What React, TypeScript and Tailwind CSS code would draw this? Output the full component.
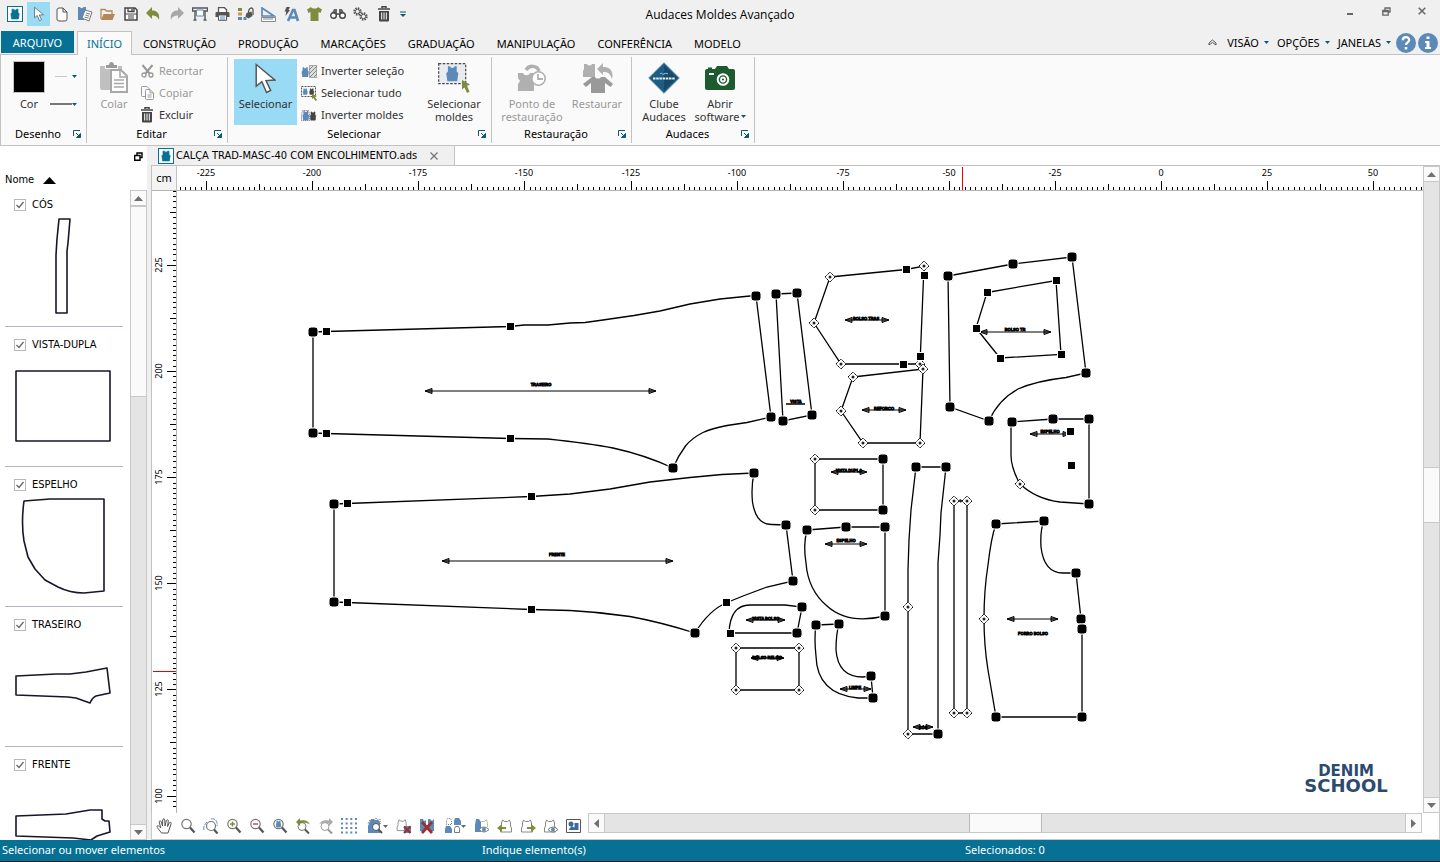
import React from "react";

const VEST = "M4 1.5h2c.3 2 3.700 2 4 0h2v4.500l1.500 1.500-1 7h-9l-1-7L4 6z";
const BLUE = "#5b8ab8";
const OLIVE = "#7f8c3d";
const DARK = "#555555";

interface DrawProps {
  w?: number;
  h?: number;
  box?: string;
  children: React.ReactNode;
}

const Draw = ({ w = 16, h = w, box = `0 0 ${w} ${h}`, children }: DrawProps) => (
  <svg width={w} height={h} viewBox={box} fill="none" className="shrink-0" aria-hidden>
    {children}
  </svg>
);

const Caret = ({ color = "#0b5a73" }: { color?: string }) => (
  <Draw w={5} h={3}>
    <path d="M0 0h5L2.500 3z" fill={color} />
  </Draw>
);

const Launcher = () => (
  <Draw w={8}>
    <path d="M.5 6V.5H7" stroke="#0b5a73" />
    <path d="M3 3l3 3M7.500 3.500v4h-4z" stroke="#0b5a73" fill="#0b5a73" />
  </Draw>
);

const AppIcon = () => (
  <Draw w={16}>
    <rect x=".5" y=".5" width="15" height="15" fill="#fff" stroke="#067195" />
    <g transform="translate(2 2) scale(.75)">
      <path d={VEST} fill="#067195" stroke="#067195" />
    </g>
  </Draw>
);

const Pointer = ({ w, h }: { w: number; h: number }) => (
  <Draw w={w} h={h} box="0 0 20 30">
    <path d="M1 1.500v21l5.500-4.500 4.500 10.500 4-2-4.500-9.500 8.500-.5z" fill="#fff" stroke="#555" strokeWidth="1.400" />
  </Draw>
);

const Trash = () => (
  <Draw w={14} h={16}>
    <path d="M5 2V.7h4V2M1 3h12" stroke="#444" strokeWidth="1.500" />
    <path d="M2 5h10v9.500a1 1 0 0 1-1 1H3a1 1 0 0 1-1-1z" fill="#444" />
    <path d="M4.700 6.500v7M7 6.500v7M9.300 6.500v7" stroke="#fff" />
  </Draw>
);

const quickTools: { label: string; icon: React.ReactNode }[] = [
  { label: "Selecionar", icon: <Pointer w={10} h={16} /> },
  {
    label: "Novo",
    icon: (
      <Draw w={12} h={15}>
        <path d="M1 3a2 2 0 0 1 2-2h4l4 4v7a2 2 0 0 1-2 2H3a2 2 0 0 1-2-2zM7 1v4h4" stroke={DARK} fill="#fff" />
      </Draw>
    ),
  },
  {
    label: "Novo modelo",
    icon: (
      <Draw w={16}>
        <path d="M1 1h2c.3 1.500 3 1.500 3.500 0h2.500v4l-2 9H1V6z" fill={BLUE} />
        <path d="M8 4l7 2-3 9-7-3z" fill="#fff" stroke="#777" />
        <path d="M9 7l4 1.200M8.300 9l4 1.200M7.600 11l4 1.200" stroke="#777" />
      </Draw>
    ),
  },
  {
    label: "Abrir",
    icon: (
      <Draw w={15} h={13}>
        <path d="M1 11V1.500h4l1.500 1.500H12v3" stroke="#b5885a" strokeWidth="1.300" />
        <path d="M3.500 6H15l-2.500 6H1z" fill="#b5885a" />
      </Draw>
    ),
  },
  {
    label: "Salvar",
    icon: (
      <Draw w={14}>
        <path d="M1 1h10l2 2v10H1z" fill="#fff" stroke="#444" strokeWidth="1.500" />
        <path d="M4 1v3.500h6V1M8 2v2" stroke="#444" strokeWidth="1.300" />
        <path d="M1 7h12M4 9h6M4 11h6" stroke="#444" />
      </Draw>
    ),
  },
  {
    label: "Desfazer",
    icon: (
      <Draw w={15} h={14}>
        <path d="M6 0v3.500c5 0 8 2.500 7 9.500-1.500-3.500-3.500-4.500-7-4.500V12L0 6z" fill={OLIVE} />
      </Draw>
    ),
  },
  {
    label: "Refazer",
    icon: (
      <Draw w={15} h={14}>
        <path d="M9 0v3.500C4 3.500 1 6 2 13c1.500-3.500 3.500-4.500 7-4.500V12l6-6z" fill="#a5a8ab" />
      </Draw>
    ),
  },
  {
    label: "Plotar",
    icon: (
      <Draw w={16} h={14}>
        <path d="M.5 1h15v3H.5zM3 13V4M13 13V4M1.500 13h3M11.500 13h3" stroke={DARK} strokeWidth="1.400" />
        <path d="M4.500 3h7v6h-7z" fill="#fff" stroke={BLUE} />
      </Draw>
    ),
  },
  {
    label: "Imprimir",
    icon: (
      <Draw w={15} h={14}>
        <path d="M3.500 5V.7h6l2 2V5" stroke={DARK} strokeWidth="1.300" fill="#fff" />
        <path d="M.5 6a1 1 0 0 1 1-1h12a1 1 0 0 1 1 1v4h-14z" fill={DARK} />
        <path d="M3.500 8h8v5.300h-8z" fill="#fff" stroke={DARK} />
        <path d="M5 10h5M5 12h5" stroke={BLUE} />
      </Draw>
    ),
  },
  {
    label: "Cores",
    icon: (
      <Draw w={16} h={14}>
        <path d="M0 1h4v3H0z" fill={OLIVE} />
        <path d="M0 5.500h4v3H0z" fill="#c8964e" />
        <path d="M0 10h4v3H0zM5.500 10h3v3h-3z" fill={BLUE} />
        <path d="M8.500 6l5-1.500 1 4.500-4 2.500-3-2z" fill={DARK} />
        <path d="M10.500 6c0-6 4.500-6 4.500-3v5" stroke={DARK} strokeWidth="1.300" />
      </Draw>
    ),
  },
  {
    label: "Medir",
    icon: (
      <Draw w={15} h={15}>
        <path d="M1 1l12 8H1z" stroke={BLUE} strokeWidth="1.700" />
        <path d="M.5 10.500h14v4H.5z" fill="#fff" stroke="#888" />
        <path d="M3 11v2M5 11v2M7 11v2M9 11v2M11 11v2" stroke="#888" />
      </Draw>
    ),
  },
  {
    label: "Texto rápido",
    icon: (
      <Draw w={16} h={15}>
        <path d="M4 14l5-11h1.500L14 14M6 10.500h6.500" stroke={BLUE} strokeWidth="2.600" />
        <path d="M2.500 0H6L4.500 3H6L1.500 9l.7-4.500H.5z" fill={DARK} />
      </Draw>
    ),
  },
  {
    label: "Vestir",
    icon: (
      <Draw w={15} h={14}>
        <path d="M4 0c1 2 6 2 7 0l4 2.500L13.500 6 11.500 5v9h-8V5l-2 1L0 2.500z" fill={OLIVE} />
      </Draw>
    ),
  },
  {
    label: "Procurar",
    icon: (
      <Draw w={16} h={12}>
        <path d="M4 1h3v4h2V1h3l2 4H2z" fill="#666" />
        <circle cx="3.500" cy="7.500" r="2.800" stroke="#444" strokeWidth="1.400" fill="#fff" />
        <circle cx="12.500" cy="7.500" r="2.800" stroke="#444" strokeWidth="1.400" fill="#fff" />
        <path d="M6 6h4" stroke="#444" strokeWidth="1.500" />
      </Draw>
    ),
  },
  {
    label: "Configurações",
    icon: (
      <Draw w={15} h={14}>
        <circle cx="4.500" cy="4.500" r="3.200" stroke={DARK} strokeDasharray="1.500 1" strokeWidth="2" />
        <circle cx="4.500" cy="4.500" r="2.200" stroke={DARK} />
        <circle cx="10.500" cy="9.500" r="3.200" stroke={DARK} strokeDasharray="1.500 1" strokeWidth="2" />
        <circle cx="10.500" cy="9.500" r="2.200" stroke={DARK} />
      </Draw>
    ),
  },
  { label: "Excluir", icon: <Trash /> },
];

const TitleBar = () => (
  <header className="grid h-[31px] grid-cols-[1fr_auto_1fr] items-start">
    <div className="flex h-7 items-center pl-[3px]">
      <span className="flex w-6 justify-center">
        <AppIcon />
      </span>
      {quickTools.map((tool, i) => (
        <button
          key={tool.label}
          type="button"
          aria-label={tool.label}
          className={`flex h-6 w-[23px] items-center justify-center ${i === 0 ? "bg-[#99daf4]" : ""}`}
        >
          {tool.icon}
        </button>
      ))}
      <button type="button" aria-label="Personalizar" className="flex w-4 justify-center">
        <Draw w={6}>
          <path d="M0 1h6" stroke="#0b5a73" />
          <path d="M0 3h6L3 6z" fill="#0b5a73" />
        </Draw>
      </button>
    </div>
    <h1 className="pt-1 font-['Open_Sans',sans-serif] text-[12px] leading-[22px]">Audaces Moldes Avançado</h1>
    <div className="flex h-[22px] items-center justify-end">
      <button type="button" aria-label="Minimizar" className="flex w-9 justify-center">
        <Draw w={6} h={8}>
          <path d="M0 7h6" stroke="#666" strokeWidth="2" />
        </Draw>
      </button>
      <button type="button" aria-label="Restaurar janela" className="flex w-9 justify-center">
        <Draw w={9}>
          <path d="M3 3V1h5v4H6M.8 3.500h5.400v4.700H.8zM.8 4.500h5" stroke="#666" strokeWidth="1.300" />
        </Draw>
      </button>
      <button type="button" aria-label="Fechar" className="flex w-9 justify-center">
        <Draw w={8}>
          <path d="M.7.700l6.600 6.600M7.300.700L.7 7.300" stroke="#666" strokeWidth="1.500" />
        </Draw>
      </button>
    </div>
  </header>
);

const tabs = ["CONSTRUÇÃO", "PRODUÇÃO", "MARCAÇÕES", "GRADUAÇÃO", "MANIPULAÇÃO", "CONFERÊNCIA", "MODELO"];
const menus = ["VISÃO", "OPÇÕES", "JANELAS"];

const TabBar = () => (
  <nav className="flex h-6 items-stretch border-b border-[#c2c2c2] pl-px text-[11px] leading-6">
    <button type="button" className="mb-px w-[73px] bg-[#067195] text-white">
      ARQUIVO
    </button>
    <button
      type="button"
      className="-mb-px ml-[3px] w-[55px] border border-b-0 border-[#c2c2c2] bg-[#fafafa] text-[#067195]"
    >
      INÍCIO
    </button>
    {tabs.map((tab) => (
      <button key={tab} type="button" className="px-[11px] pt-px">
        {tab}
      </button>
    ))}
    <div className="ml-auto flex items-center pr-px">
      <button type="button" aria-label="Recolher" className="mr-[10px]">
        <Draw w={9} h={7}>
          <path d="M1 4l3.500-3L8 4v2L4.500 3.500 1 6z" stroke="#555" />
        </Draw>
      </button>
      {menus.map((menu) => (
        <button key={menu} type="button" className="mr-2 flex items-center gap-[5px]">
          {menu}
          <Caret />
        </button>
      ))}
      <button type="button" aria-label="Ajuda" className="-ml-1 flex w-[22px] justify-center">
        <Draw w={20}>
          <circle cx="10" cy="10" r="10" fill={BLUE} />
          <path d="M6.800 7.200c0-4 6.400-4 6.400-.2 0 2.500-3.200 2.300-3.200 5" stroke="#fff" strokeWidth="2.300" />
          <path d="M8.700 14h2.600v2.500H8.700z" fill="#fff" />
        </Draw>
      </button>
      <button type="button" aria-label="Informações" className="flex w-[22px] justify-center">
        <Draw w={20}>
          <circle cx="10" cy="10" r="10" fill={BLUE} />
          <path d="M8.500 3.500h3V6h-3zM7 8h4.500v6H13v2H7v-2h1.500v-4H7z" fill="#fff" />
        </Draw>
      </button>
    </div>
  </nav>
);

const RibbonGroup = ({ title, width, children }: { title: string; width: string; children: React.ReactNode }) => (
  <section className={`my-0.5 flex flex-col border-r border-[#c2c2c2] ${width}`}>
    <div className="flex h-[68px] items-start">{children}</div>
    <div className="flex items-center pr-[5px]">
      <h2 className="flex-1 pl-0.5 text-center text-[11px] leading-[18px]">{title}</h2>
      <button type="button" aria-label={`Opções de ${title}`}>
        <Launcher />
      </button>
    </div>
  </section>
);

interface BigProps {
  icon: React.ReactNode;
  lines: string[];
  width: string;
  active?: boolean;
  disabled?: boolean;
  menu?: boolean;
}

const BigButton = ({ icon, lines, width, active, disabled, menu }: BigProps) => (
  <button
    type="button"
    disabled={disabled}
    className={`mt-0.5 flex h-[66px] shrink-0 flex-col items-center text-[11px] leading-[13px] ${width} ${
      active ? "bg-[#99daf4]" : ""
    } ${disabled ? "text-[#999]" : "text-[#333]"}`}
  >
    <span className="flex h-[38px] items-center">{icon}</span>
    {lines.map((line, i) => (
      <span key={line} className="flex items-center gap-px whitespace-nowrap">
        {line}
        {menu && i === lines.length - 1 && <Caret />}
      </span>
    ))}
  </button>
);

const SmallButton = ({ icon, label, disabled }: { icon: React.ReactNode; label: string; disabled?: boolean }) => (
  <button
    type="button"
    disabled={disabled}
    className={`flex h-[22px] items-center gap-1 text-[11px] whitespace-nowrap ${disabled ? "text-[#999]" : "text-[#333]"}`}
  >
    <span className="flex w-4 justify-center">{icon}</span>
    {label}
  </button>
);

const GRAY = "#b0b0b0";

const Ribbon = () => (
  <div className="flex h-[91px] border-b border-l border-[#c2c2c2] bg-[#fafafa]">
    <RibbonGroup title="Desenho" width="w-[86px]">
      <button type="button" className="mt-1 ml-3 flex flex-col items-center text-[11px] leading-[18px] text-[#333]">
        <span className="mb-0.5 h-8 w-8 border border-[#c2c2c2] bg-black" />
        Cor
      </button>
      <div className="ml-[5px] flex flex-col gap-[22px] pt-4">
        <button type="button" aria-label="Estilo da linha" className="flex h-[6px] items-center justify-end gap-[5px]">
          <span className="h-px w-3 bg-[#c8c8c8]" />
          <Caret />
        </button>
        <button type="button" aria-label="Espessura da linha" className="flex h-[6px] items-center">
          <span className="h-0.5 w-[22px] bg-[#777]" />
          <Caret />
        </button>
      </div>
    </RibbonGroup>

    <RibbonGroup title="Editar" width="w-[141px]">
      <BigButton
        width="ml-1 w-[46px]"
        disabled
        lines={["Colar"]}
        icon={
          <Draw w={28} h={32}>
            <path d="M0 4h5v3h13V4h4v24H2a2 2 0 0 1-2-2z" fill="#c0c0c0" />
            <path d="M6 3h3c0-4 5-4 5 0h3v3H6z" fill="#999" />
            <path d="M11 8h10l6 6v16H11z" fill="#fff" stroke="#a8a8a8" strokeWidth="2" />
            <path d="M20 8v7h7M14 18h10M14 21.500h10M14 25h10" stroke="#a8a8a8" strokeWidth="1.500" />
          </Draw>
        }
      />
      <div className="ml-0.5 flex flex-col pt-[3px]">
        <SmallButton
          disabled
          label="Recortar"
          icon={
            <Draw w={13} h={14}>
              <path d="M1.500 1l7 8.500M11.500 1l-7 8.500" stroke="#999" strokeWidth="2" />
              <circle cx="3" cy="11" r="2" stroke="#999" strokeWidth="1.300" />
              <circle cx="10" cy="11" r="2" stroke="#999" strokeWidth="1.300" />
            </Draw>
          }
        />
        <SmallButton
          disabled
          label="Copiar"
          icon={
            <Draw w={13} h={14}>
              <path d="M4 10.500H1.500a1 1 0 0 1-1-1v-8a1 1 0 0 1 1-1H6L8.500 3" stroke="#999" />
              <path d="M4.500 4.500a1 1 0 0 1 1-1H9L12.500 7v5.500a1 1 0 0 1-1 1h-6a1 1 0 0 1-1-1zM9 4v3h3M6.500 9h4M6.500 11h4" stroke="#999" fill="#fff" />
            </Draw>
          }
        />
        <SmallButton label="Excluir" icon={<Trash />} />
      </div>
    </RibbonGroup>

    <RibbonGroup title="Selecionar" width="w-[264px]">
      <BigButton width="ml-1.5 w-[63px]" active lines={["Selecionar"]} icon={<Pointer w={21} h={31} />} />
      <div className="ml-1 flex flex-col pt-[3px]">
        <SmallButton
          label="Inverter seleção"
          icon={
            <Draw w={16} h={13}>
              <g transform="translate(-1 1) scale(.65 .75)">
                <path d={VEST} fill={BLUE} />
              </g>
              <path d="M8.500.500h7v12h-7z" stroke="#666" strokeDasharray="1 1" fill="#ddd" />
              <path d="M8 5l4-4M8 9l8-8M9 12l7-7M13 12l3-3" stroke="#888" />
            </Draw>
          }
        />
        <SmallButton
          label="Selecionar tudo"
          icon={
            <Draw w={16} h={15}>
              <path d="M.5.500h14v10H.5z" stroke="#555" strokeDasharray="2 1" />
              <g transform="translate(1 2) scale(.4 .45)">
                <path d={VEST} fill={BLUE} stroke={BLUE} />
              </g>
              <g transform="translate(7.500 2) scale(.4 .45)">
                <path d={VEST} fill="#444" stroke="#444" />
              </g>
              <path d="M11 8l5 2-2 1 2 3-1.500 1-2-3-1.500 1z" fill={OLIVE} />
            </Draw>
          }
        />
        <SmallButton
          label="Inverter moldes"
          icon={
            <Draw w={16} h={11}>
              <g transform="scale(.6 .7)">
                <path d={VEST} fill={BLUE} />
              </g>
              <path d="M.5 10.500v-5l1-5h6l1 4v6z" stroke="#666" strokeDasharray="1 1" />
              <g transform="translate(8 1) scale(.5 .63)">
                <path d={VEST} fill="#444" stroke="#444" />
              </g>
            </Draw>
          }
        />
      </div>
      <BigButton
        width="ml-auto mr-1 w-[66px]"
        lines={["Selecionar", "moldes"]}
        icon={
          <Draw w={32}>
            <path d="M.7 1.700h27v20H.7z" fill="#e8ecf0" stroke="#444" strokeWidth="1.200" strokeDasharray="2.500 1.500" />
            <g transform="translate(5.500 2.500) scale(1.100 1.150)">
              <path d={VEST} fill={BLUE} />
            </g>
            <path d="M24 18l8 4.500-3 1.300 2.500 6-2.500 1.200-2.500-5.500-2.500 2z" fill={OLIVE} />
          </Draw>
        }
      />
    </RibbonGroup>

    <RibbonGroup title="Restauração" width="w-[140px]">
      <BigButton
        width="ml-2 w-[64px]"
        disabled
        lines={["Ponto de", "restauração"]}
        icon={
          <Draw w={30}>
            <path d="M1 10h5c1 3 6 3 7 0h4v18H1v-7l2-3-2-3z" fill={GRAY} />
            <path d="M9 7c3-5 11-5 13 1" stroke={GRAY} strokeWidth="3.500" />
            <circle cx="21.500" cy="15.500" r="6.700" fill="#fff" stroke={GRAY} strokeWidth="1.600" />
            <path d="M21 11v5h5" stroke="#999" strokeWidth="1.300" />
          </Draw>
        }
      />
      <BigButton
        width="w-[66px]"
        disabled
        lines={["Restaurar"]}
        icon={
          <Draw w={31} h={32}>
            <path d="M2 2h3c1 2 4 2 5 0h3v13H1V9l1-2z" fill={GRAY} />
            <path d="M15 7l6-6v4c7-1 11 5 9 12-2-6-4-7-9-7v3z" fill={GRAY} />
            <path d="M10 15h3c1 2 5 2 6 0h4l8 7-2.500 3-5.500-4v10H9V21l-5 4-3-3z" fill="#999" />
          </Draw>
        }
      />
    </RibbonGroup>

    <RibbonGroup title="Audaces" width="w-[123px]">
      <BigButton
        width="ml-1.5 w-[52px]"
        lines={["Clube", "Audaces"]}
        icon={
          <Draw w={32}>
            <path d="M16 .7L31.300 16 16 31.300.7 16z" fill="#1c5c85" stroke="#6d97ad" />
            <path d="M16 3l13 13-13 13z" fill="#17496b" />
            <path d="M12 12c2-2 2 1 4 0s2-1 4 0" stroke="#a9c6d8" />
            <path d="M5 16.500h22" stroke="#e4eef3" strokeWidth="2" strokeDasharray="2.500 .7" />
          </Draw>
        }
      />
      <BigButton
        width="ml-[3px] w-[54px]"
        menu
        lines={["Abrir", "software"]}
        icon={
          <Draw w={30} h={24}>
            <path d="M0 5a2 2 0 0 1 2-2h1V1.500h4V3h3l2-3h10l2 3h4a2 2 0 0 1 2 2v17a2 2 0 0 1-2 2H2a2 2 0 0 1-2-2z" fill="#1d5a2e" />
            <path d="M4 8h5" stroke="#fff" strokeWidth="2" />
            <circle cx="18" cy="13.500" r="5.300" stroke="#fff" strokeWidth="2" />
            <circle cx="18" cy="13.500" r="2" stroke="#fff" strokeWidth="1.800" />
          </Draw>
        }
      />
    </RibbonGroup>
  </div>
);

const thumbs: { name: string; d: string }[] = [
  { name: "CÓS", d: "M59 4h11l-2 24-1 8v62H56V40l1-16z" },
  { name: "VISTA-DUPLA", d: "M16 16h94v70H16z" },
  { name: "ESPELHO", d: "M24 6l26-2h54v92l-20 2q-14 0-26-6l-13-7-10-11-7-12-4-16q-3-18 0-40z" },
  { name: "TRASEIRO", d: "M16 41l40-2h14l16-2 21-4 3 25-14 3q-4 2-6 7l-14-5-8-1-52-2z" },
  { name: "FRENTE", d: "M16 41l50-2 24-4h12v9l3 2h4l1 11-13 4-6 4-18-2-57-2z" },
];

const arrowButton = "flex shrink-0 items-center justify-center border border-[#c8c8c8] bg-[#fafafa]";

const VerticalScroll = ({ thumb, before = "hidden", after }: { thumb: string; before?: string; after: string }) => (
  <div className="flex w-[17px] shrink-0 flex-col border-x border-[#c8c8c8] bg-[#e4e4e4]">
    <button type="button" aria-label="Rolar para cima" className={`-mx-px h-4 ${arrowButton}`}>
      <Draw w={9} h={5}>
        <path d="M4.500 0L9 5H0z" fill="#707070" />
      </Draw>
    </button>
    <div className={before} />
    <div className={`-mx-px border border-[#c8c8c8] bg-[#fafafa] ${thumb}`} />
    <div className={after} />
    <button type="button" aria-label="Rolar para baixo" className={`-mx-px h-4 ${arrowButton}`}>
      <Draw w={9} h={5}>
        <path d="M4.500 5L9 0H0z" fill="#707070" />
      </Draw>
    </button>
  </div>
);

const PieceList = () => (
  <aside className="flex w-[147px] shrink-0 flex-col bg-white font-['DejaVu_Sans_Condensed','DejaVu_Sans',sans-serif]">
    <div className="flex h-5 items-center justify-end pr-1">
      <button type="button" aria-label="Desencaixar painel">
        <Draw w={9}>
          <path d="M3 3V1h5v4.500H6M.7 3.500H6v4.700H.7z" stroke="#000" strokeWidth="1.400" />
        </Draw>
      </button>
    </div>
    <button type="button" className="flex h-6 items-center gap-[9px] pt-1 pl-[5px] text-[11px]">
      Nome
      <Draw w={13} h={7}>
        <path d="M6.500 0L13 7H0z" fill="#000" />
      </Draw>
    </button>
    <div className="flex min-h-0 flex-1">
      <ul className="-mt-[3px] min-w-0 flex-1 overflow-hidden">
        {thumbs.map((piece) => (
          <li key={piece.name} className="mr-[7px] ml-[5px] flex flex-col border-b border-[#b4b4c8]">
            <label className="flex h-7 items-center gap-1.5 pt-2 pl-[9px] text-[11px] leading-3">
              <span className="grid h-3 w-3 place-items-center">
                <input
                  type="checkbox"
                  defaultChecked
                  className="peer col-start-1 row-start-1 h-3 w-3 appearance-none border border-[#b8b8b8] bg-white"
                />
                <svg viewBox="0 0 8 8" className="pointer-events-none invisible col-start-1 row-start-1 h-2 w-2 peer-checked:visible" aria-hidden>
                  <path d="M.5 4L3 6.500 7.500 1" fill="none" stroke="#666" strokeWidth="1.300" />
                </svg>
              </span>
              {piece.name}
            </label>
            <svg className="h-[111px] w-full" aria-hidden>
              <path d={piece.d} transform="translate(-5 0)" fill="none" stroke="#16162a" strokeWidth="1.600" strokeLinejoin="round" />
            </svg>
          </li>
        ))}
      </ul>
      <VerticalScroll thumb="h-[191px]" after="flex-1" />
    </div>
  </aside>
);

// ruler scale: 25 cm take 106.1 px
const PX_PER_CM = 4.244;

const tickLength = (i: number) => (i % 20 === 0 ? 9 : i % 10 === 0 ? 6 : 3);

const HorizontalRuler = () => {
  const ticks = Array.from({ length: 236 }, (_, i) => i - 186);
  return (
    <svg className="h-6 min-w-0 flex-1 bg-white" role="img" aria-label="Régua horizontal">
      {ticks.map((i) => {
        const x = Math.round(984 + i * 1.25 * PX_PER_CM);
        return (
          <g key={i}>
            <path d={`M${x + 0.5} 24v-${tickLength(i)}`} stroke="#000" />
            {i % 20 === 0 && (
              <text x={x} y="10" textAnchor="middle" className="text-[9px]">
                {i * 1.25}
              </text>
            )}
          </g>
        );
      })}
      <path d="M785.500 1v23" stroke="#e00" />
    </svg>
  );
};

const VerticalRuler = () => {
  const ticks = Array.from({ length: 117 }, (_, i) => i);
  return (
    <svg className="h-full w-[25px] shrink-0 border-r border-[#b4b4b4] bg-white" role="img" aria-label="Régua vertical">
      {ticks.map((n) => {
        const i = 194 - n;
        const y = Math.round(74 + (180 - i) * 1.25 * PX_PER_CM);
        return (
          <g key={i}>
            <path d={`M24 ${y + 0.5}h-${tickLength(i)}`} stroke="#000" />
            {i % 20 === 0 && (
              <text transform={`translate(10 ${y}) rotate(-90)`} textAnchor="middle" className="text-[9px]">
                {i * 1.25}
              </text>
            )}
          </g>
        );
      })}
      <path d="M1 480.500h23" stroke="#e00" />
    </svg>
  );
};

type Point = [number, number];

interface Piece {
  d: string;
  round?: Point[];
  square?: Point[];
  diamond?: Point[];
  grain?: [number, number, number];
  label?: [string, number, number];
}

const pieces: Piece[] = [
  {
    d: "M313 332L326 331.500 510 326.500 524 325 548 325 570 323 585 322.500 603 320 634 315.500 660 311 690 304 720 299 750 296H756L771 417 747 422.500 727 425.500Q710 429 703 432.500 692 438 685.500 446 678 456 673 468 645 455 613 448 590 443.500 548 439L510 438.500 326 433.500 313 433z",
    round: [[313, 332], [756, 296], [771, 417], [673, 468], [313, 433]],
    square: [[326.5, 331.5], [510.5, 326.5], [510.5, 438.5], [326.5, 433.5]],
    grain: [425, 656, 391],
    label: ["TRASEIRO", 541, 386],
  },
  {
    d: "M334 504L347 503.500 531 496.500 570 494 610 489 650 482 690 477.500 722 474.500 754 473Q751 487 752.500 502 756 525 772 524.500L786 525 793 581 767 587 743 596 727 602.500Q709 610 695 633 660 622 630 616.500 600 612 570 610.500L531 609.500 347 602.500 334 602z",
    round: [[334, 504], [754, 473], [786, 525], [793, 581], [695, 633], [334, 602]],
    square: [[347.5, 503.5], [531.5, 496.5], [726.5, 602.5], [531.5, 609.5], [347.5, 602.5]],
    grain: [442, 673, 561],
    label: ["FRENTE", 557, 556],
  },
  {
    d: "M776 294L797 293 812 415 783 421zM786 404h19",
    round: [[776, 294], [797, 293], [812, 415], [783, 421]],
    label: ["VISTA", 796, 403],
  },
  {
    d: "M830 277L906 269.500 924 266 920 364H841L814 323z",
    diamond: [[830, 277], [924, 266], [920, 364], [841, 364], [814, 323]],
    square: [[906.5, 269.5], [924.5, 275.5], [920.5, 356.5], [903.5, 364.5]],
    grain: [845, 889, 320],
    label: ["BOLSO TRAS", 866, 320],
  },
  {
    d: "M853 377L923 369 920 443H863L841 411z",
    diamond: [[853, 377], [923, 369], [920, 443], [863, 443], [841, 411]],
    grain: [862, 906, 410],
    label: ["REFORCO", 884, 410],
  },
  {
    d: "M948 276L1013 264 1072 257 1086 373 1066 377.500Q1036 381 1018 389 998 400 989 421L950 407z",
    round: [[948, 276], [1013, 264], [1072, 257], [1086, 373], [989, 421], [950, 407]],
  },
  {
    d: "M987 292.500L1056 280.500 1061 354.500 1000 358 976 328z",
    square: [[987.5, 292.5], [1056.5, 280.5], [1061.5, 354.5], [1000.5, 358.5], [976.5, 328.5]],
    grain: [980, 1051, 332],
    label: ["BOLSO TR", 1015, 331],
  },
  {
    d: "M1012 422L1053 419H1089V504L1060 502Q1036 499 1020 484 1011 468 1011 455V422",
    round: [[1012, 422], [1053, 419], [1089, 419], [1089, 504]],
    square: [[1070.5, 431.5], [1071.5, 465.5]],
    diamond: [[1020, 484]],
    grain: [1030, 1070, 434],
    label: ["ESPELHO", 1050, 433],
  },
  {
    d: "M815 459H883V510H815z",
    round: [[883, 459], [883, 510]],
    diamond: [[815, 459], [815, 510]],
    grain: [831, 867, 472],
    label: ["VISTA DUPLA", 849, 472],
  },
  {
    d: "M807 530L846 527H885V616Q848 625 827 606 808 590 806 563 803 545 807 530",
    round: [[807, 530], [846, 527], [885, 527], [885, 616]],
    grain: [825, 867, 544],
    label: ["ESPELHO", 846, 542],
  },
  {
    d: "M916 467H946L941 513 940 535 938 563V734H908V570L909 540 911 510z",
    round: [[916, 467], [946, 467], [938, 734]],
    diamond: [[908, 607], [908, 734]],
    grain: [913, 933, 727],
    label: ["CÓS", 923, 729],
  },
  {
    d: "M954 501H967V713H954z",
    diamond: [[954, 501], [967, 501], [954, 713], [967, 713]],
  },
  {
    d: "M996 524L1044 521Q1040 530 1041 547 1044 573 1063 573H1076L1081 619 1082 629V717H996L988 670Q984 645 984 619 984 590 988 565 991 538 996 524",
    round: [[996, 524], [1044, 521], [1076, 573], [1081, 619], [1082, 629], [1082, 717], [996, 717]],
    diamond: [[984, 619]],
    grain: [1007, 1058, 619],
    label: ["FORRO BOLSO", 1033, 635],
  },
  {
    d: "M729 633Q730 605 750 605H785L802 607 797 633z",
    round: [[802, 607], [797, 633]],
    square: [[730.5, 633.5]],
    grain: [746, 785, 620],
    label: ["VISTA BOLSO", 766, 620],
  },
  {
    d: "M736 648H799V690H736z",
    diamond: [[736, 648], [799, 648], [799, 690], [736, 690]],
    grain: [751, 784, 658],
    label: ["BOLSO RELOG", 767, 659],
  },
  {
    d: "M816 625L839 624Q836 634 836 650 838 677 863 677L871 676 873 698H858Q817 694 816 656 814 638 816 625",
    round: [[816, 625], [839, 624], [871, 676], [873, 698]],
    grain: [840, 871, 689],
    label: ["LIMPE", 855, 689],
  },
];

const Canvas = () => (
  <div className="min-w-0 flex-1 overflow-hidden bg-white">
    <svg className="h-full w-full" role="img" aria-label="Área de moldes">
      <g transform="translate(-177 -191)">
        {pieces.map((p, n) => (
          <g key={n}>
            <path d={p.d} fill="none" stroke="#000" strokeWidth="1.300" />
            {p.grain && (
              <path
                d={`M${p.grain[0]} ${p.grain[2]}H${p.grain[1]}m0 0l-7-2.500v5zM${p.grain[0]} ${p.grain[2]}l7-2.500v5z`}
                fill="#777"
                stroke="#000"
              />
            )}
            {p.label && (
              <text
                x={p.label[1]}
                y={p.label[2]}
                textAnchor="middle"
                stroke="#000"
                strokeWidth=".8"
                className="font-['Liberation_Sans',sans-serif] text-[4px] font-bold"
              >
                {p.label[0]}
              </text>
            )}
          </g>
        ))}
        {pieces.map((p, n) => (
          <g key={n}>
            {p.round?.map(([x, y]) => (
              <rect key={`r${x}-${y}`} x={x - 5} y={y - 5} width="10" height="10" rx="3" stroke="#fff" />
            ))}
            {p.diamond?.map(([x, y]) => (
              <g key={`d${x}-${y}`}>
                <path d={`M${x - 5} ${y}l5-5 5 5-5 5z`} fill="#fff" stroke="#000" strokeDasharray="1.500 .5" />
                <circle cx={x} cy={y} r="1.500" fill="#222" />
              </g>
            ))}
            {p.square?.map(([x, y]) => (
              <rect key={`s${x}-${y}`} x={x - 4} y={y - 4} width="8" height="8" stroke="#fff" />
            ))}
          </g>
        ))}
        <text x="960.500" y="503" textAnchor="middle" className="text-[6px]">
          1
        </text>
      </g>
      <g transform="translate(1169 0)" textAnchor="middle" fill="#2c4a70" className="font-['DejaVu_Sans',sans-serif] font-bold">
        <text y="585" className="text-[15px]">DENIM</text>
        <text y="601" className="text-[18px]">SCHOOL</text>
      </g>
    </svg>
  </div>
);

const Lens = ({ blue, children }: { blue?: boolean; children?: React.ReactNode }) => (
  <Draw w={16}>
    <circle cx="6.500" cy="6" r="4.700" stroke={blue ? BLUE : "#777"} strokeWidth="1.200" fill="#fff" />
    <path d="M10 9.500l4.500 5" stroke="#555" strokeWidth="2.200" />
    {children}
  </Draw>
);

const OUTLINE_VEST = "M4.500 5l1-3 2 1.500h3L12.500 2l1 3v3l1 2v4h-11v-4l1-2z";

const Eye = () => (
  <>
    <path d="M5 11.500q5-5 10 0-5 5-10 0z" fill="#fff" stroke="#777" />
    <circle cx="10" cy="11.500" r="2" fill={BLUE} />
  </>
);

const viewTools: { label: string; icon: React.ReactNode; menu?: boolean }[] = [
  {
    label: "Mover vista",
    icon: (
      <Draw w={17} h={16}>
        <path
          d="M5.500 15L1.300 9.500c-1-1.600.8-2.500 1.700-1.300L4.800 10 3.200 4.200c-.3-1.600 1.500-2 2-.5L6.500 8 6.700 2c0-1.600 2-1.600 2.100 0L9 8l1.300-5.300c.5-1.500 2.200-1 2 .4L11.500 8.500l1.800-3.700c.8-1.200 2.300-.5 1.800 1L13 12l-1 3z"
          stroke="#555"
          fill="#fff"
        />
      </Draw>
    ),
  },
  { label: "Zoom", icon: <Lens /> },
  {
    label: "Zoom por área",
    icon: (
      <Draw w={16}>
        <circle cx="8" cy="8" r="4.500" stroke="#777" strokeWidth="1.200" fill="#fff" />
        <path d="M11 11.500l3.500 4" stroke="#555" strokeWidth="2.200" />
        <path d="M1 12c-1-3 1-6 3-8M8 1c4-1 7 2 6 7" stroke={BLUE} strokeDasharray="4 1" />
      </Draw>
    ),
  },
  {
    label: "Aumentar zoom",
    icon: (
      <Lens>
        <path d="M4 6h5M6.500 3.500v5" stroke={OLIVE} strokeWidth="1.500" />
      </Lens>
    ),
  },
  {
    label: "Diminuir zoom",
    icon: (
      <Lens>
        <path d="M4 6h5" stroke="#b55" strokeWidth="1.500" />
      </Lens>
    ),
  },
  {
    label: "Zoom no molde",
    icon: (
      <Lens>
        <g transform="translate(3.300 2.500) scale(.4 .45)">
          <path d={VEST} fill={BLUE} stroke={BLUE} strokeWidth="2" />
        </g>
      </Lens>
    ),
  },
  {
    label: "Zoom anterior",
    icon: (
      <Draw w={16}>
        <circle cx="7" cy="8.500" r="4" stroke="#777" fill="#fff" />
        <path d="M10 11.500l4 4" stroke="#555" strokeWidth="2" />
        <path d="M1 4l4-4v2.500c5-1 8 0 10 4-3-2-6-2.500-10-1V8z" fill={OLIVE} />
      </Draw>
    ),
  },
  {
    label: "Próximo zoom",
    icon: (
      <Draw w={16}>
        <circle cx="7" cy="8.500" r="4" stroke="#999" fill="#fff" />
        <path d="M10 11.500l4 4" stroke="#999" strokeWidth="2" />
        <path d="M15 4l-4-4v2.500c-5-1-8 0-10 4 3-2 6-2.500 10-1V8z" fill="#aaa" />
      </Draw>
    ),
  },
  {
    label: "Grade",
    icon: (
      <Draw w={16}>
        {[1.5, 6, 10.5, 15].map((y) => (
          <path key={y} d={`M0 ${y - 0.5}h16`} stroke={BLUE} strokeWidth="2" strokeDasharray="2 2.660" />
        ))}
      </Draw>
    ),
  },
  {
    label: "Buscar molde",
    menu: true,
    icon: (
      <Draw w={16}>
        <path d="M1 15V8L4 1h3l2 2 2-2 2 4v10z" fill={BLUE} />
        <path d="M3 2l-2 4M9 0v3M13 1v5" stroke={DARK} strokeDasharray="1 1" />
        <circle cx="9" cy="9" r="3.500" stroke="#555" fill="#fff" />
        <path d="M11.500 11.500L15 15" stroke="#555" strokeWidth="2" />
      </Draw>
    ),
  },
  {
    label: "Remover molde",
    icon: (
      <Draw w={16}>
        <g transform="translate(-2 0) scale(.9)">
          <path d={OUTLINE_VEST} stroke="#888" fill="#fff" />
        </g>
        <path d="M8 8h7v7H8z" fill={BLUE} />
        <path d="M8 8.500l6.500 6.500M14.500 8.500L8 15" stroke="#9c2f2f" strokeWidth="2.200" />
      </Draw>
    ),
  },
  {
    label: "Remover todos",
    icon: (
      <Draw w={16}>
        <path d="M1 1h3l1 2 2-1v11H1zM9 1h2l2 2 2-2v12H9z" fill={BLUE} />
        <path d="M3 4l10 11M13 4L3 15" stroke="#9c2f2f" strokeWidth="2.800" />
      </Draw>
    ),
  },
  {
    label: "Organizar",
    menu: true,
    icon: (
      <Draw w={16}>
        <path d="M1.500 6.500v-4l1-2h3l1 2v4z" stroke="#777" strokeDasharray="1 1" />
        <path d="M9 7V3l1-3h4l2 3v4zM0 15v-4l1-3h4l2 3v4z" fill={BLUE} />
        <path d="M9.500 14.500v-4l1-2h3l1 2v4z" stroke="#777" />
      </Draw>
    ),
  },
  {
    label: "Exibir seleção",
    icon: (
      <Draw w={16}>
        <path d="M1 14V7l1-6h3l2 3v10z" fill={BLUE} />
        <path d="M7.500 3.500h3l2-2 1 4v3" stroke={OLIVE} strokeDasharray="1 1" />
        <Eye />
      </Draw>
    ),
  },
  {
    label: "Molde anterior",
    icon: (
      <Draw w={16}>
        <path d={OUTLINE_VEST} stroke="#888" fill="#fff" />
        <path d="M0 10l5-4v3h4v2H5v3z" fill={OLIVE} />
      </Draw>
    ),
  },
  {
    label: "Próximo molde",
    icon: (
      <Draw w={16}>
        <g transform="translate(-2 0)">
          <path d={OUTLINE_VEST} stroke="#888" fill="#fff" />
        </g>
        <path d="M16 10l-5-4v3H7v2h4v3z" fill={OLIVE} />
      </Draw>
    ),
  },
  {
    label: "Exibir molde",
    icon: (
      <Draw w={16}>
        <g transform="translate(-2 0)">
          <path d={OUTLINE_VEST} stroke="#888" fill="#fff" />
        </g>
        <Eye />
      </Draw>
    ),
  },
  {
    label: "Imagem de fundo",
    icon: (
      <Draw w={15} h={14}>
        <path d="M.5.500h14v13H.5z" stroke="#555" fill="#fff" />
        <circle cx="5" cy="5" r="2.500" fill="#3b6a9a" />
        <path d="M2.500 11l3-4 3 1.500V4h4v7z" fill="#3b6a9a" />
      </Draw>
    ),
  },
];

const ViewBar = () => (
  <div className="flex h-[27px] shrink-0 border-b border-l border-[#c8c8c8] bg-white">
    <div className="flex items-center pl-px">
      {viewTools.map((tool) => (
        <button
          key={tool.label}
          type="button"
          aria-label={tool.label}
          className={`flex h-6 items-center ${tool.menu ? "ml-[7px] w-[25px]" : "w-[23px] justify-center"}`}
        >
          {tool.icon}
          {tool.menu && <Caret color="#666" />}
        </button>
      ))}
    </div>
    <div className="ml-[3px] flex h-5 min-w-0 flex-1 border border-[#c8c8c8] bg-[#e4e4e4]">
      <button type="button" aria-label="Rolar para a esquerda" className="flex w-4 items-center justify-center border-r border-[#c8c8c8] bg-[#fafafa]">
        <Draw w={5} h={9}>
          <path d="M0 4.500L5 0v9z" fill="#707070" />
        </Draw>
      </button>
      <div className="grow-[363]" />
      <div className="w-[73px] border-x border-[#b8b8b8] bg-[#fafafa]" />
      <div className="grow-[362]" />
      <button type="button" aria-label="Rolar para a direita" className="flex w-4 items-center justify-center border-l border-[#c8c8c8] bg-[#fafafa]">
        <Draw w={5} h={9}>
          <path d="M5 4.500L0 0v9z" fill="#707070" />
        </Draw>
      </button>
    </div>
    <div className="w-[18px] border-r border-[#c8c8c8]" />
  </div>
);

const Workspace = () => (
  <main className="flex min-w-0 flex-1 flex-col border-l-4 border-[#f0f0f0]">
    <div className="flex h-[19px] shrink-0 items-stretch bg-white">
      <div className="flex items-center border-r border-[#c2c2c2] bg-[#f0f0f0] pt-px pr-4 pl-[7px] font-['DejaVu_Sans_Condensed','DejaVu_Sans',sans-serif] text-[11px]">
        <AppIcon />
        <span className="ml-0.5">CALÇA TRAD-MASC-40 COM ENCOLHIMENTO.ads</span>
        <button type="button" aria-label="Fechar documento" className="ml-[13px]">
          <Draw w={8}>
            <path d="M.5.500l7 7M7.500.500l-7 7" stroke="#777" strokeWidth="1.300" />
          </Draw>
        </button>
      </div>
    </div>
    <div className="flex min-h-0 flex-1 border-t border-l border-[#c2c2c2]">
      <div className="flex min-w-0 flex-1 flex-col">
        <div className="flex h-[25px] shrink-0 border-b border-[#b4b4b4]">
          <span className="flex w-[25px] items-center justify-center border-r border-[#c2c2c2] bg-[#f4f4f4] text-[11px]">cm</span>
          <HorizontalRuler />
        </div>
        <div className="flex min-h-0 flex-1">
          <VerticalRuler />
          <Canvas />
        </div>
      </div>
      <VerticalScroll before="grow-[286]" thumb="h-14" after="grow-[274]" />
    </div>
    <ViewBar />
  </main>
);

export default function App() {
  return (
    <div className="flex h-screen flex-col overflow-hidden bg-[#f0f0f0] font-['Noto_Sans',sans-serif] text-black">
      <TitleBar />
      <TabBar />
      <Ribbon />
      <div className="flex min-h-0 flex-1">
        <PieceList />
        <Workspace />
      </div>
      <footer className="grid h-[22px] shrink-0 grid-cols-3 items-center border-b border-[#1a1a1a] bg-[#067195] text-[11px] text-white">
        <span className="pl-0.5">Selecionar ou mover elementos</span>
        <span className="pl-0.5">Indique elemento(s)</span>
        <span className="pl-[5px]">Selecionados: 0</span>
      </footer>
    </div>
  );
}
